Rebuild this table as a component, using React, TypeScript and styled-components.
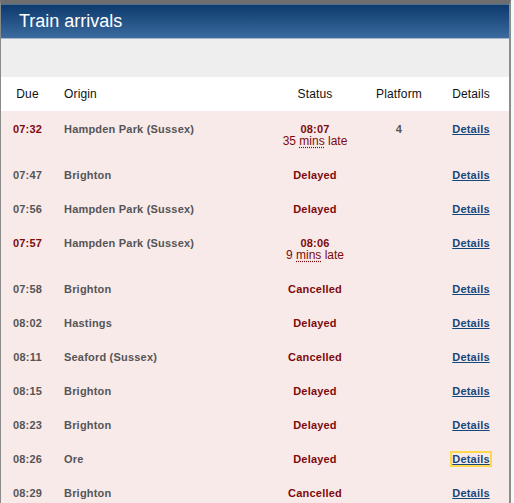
import React from 'react';
import styled, { createGlobalStyle } from 'styled-components';

const GlobalStyle = createGlobalStyle`
  html, body {
    margin: 0;
    padding: 0;
    background: #f4f7fb;
    font-family: "Liberation Sans", Arial, sans-serif;
  }
`;

const Frame = styled.div`
  width: 508px;
  border-top: 4px solid #6e6e6e;
  border-left: 1px solid #8a8a8a;
  border-right: 2px solid #8c8c8c;
  background: #fff;
  height: 499px;
  overflow: hidden;
`;

const TitleBar = styled.div`
  height: 33px;
  border-top: 1px solid #4a6f99;
  background: linear-gradient(to bottom, #0e3a6c, #3a6b9f);
  border-bottom: 1px solid #a9b8c8;
  display: flex;
  align-items: center;
  padding-left: 18px;
  h1 {
    margin: 0;
    font-size: 18px;
    font-weight: normal;
    color: #fff;
  }
`;

const FilterPanel = styled.div`
  height: 38px;
  background: #eeeeee;
`;

const Table = styled.table`
  width: 508px;
  border-collapse: collapse;
  table-layout: fixed;
`;

const Head = styled.th<{ $w: number; $left?: boolean }>`
  width: ${(p) => (p.$left ? p.$w - 10 : p.$w)}px;
  height: 34px;
  padding: ${(p) => (p.$left ? '0 0 0 10px' : '0')};
  text-align: ${(p) => (p.$left ? 'left' : 'center')};
  font-size: 12px;
  font-weight: normal;
  letter-spacing: 0.15px;
  color: #111;
  background: #fff;
`;

const Row = styled.tr`
  background: #f9eaea;
`;

const Cell = styled.td<{ $left?: boolean; $tone?: 'late' | 'red' | 'grey' }>`
  padding: ${(p) => (p.$left ? '12px 0 10px 10px' : '12px 0 10px')};
  text-align: ${(p) => (p.$left ? 'left' : 'center')};
  vertical-align: top;
  font-size: 11px;
  line-height: 12px;
  font-weight: bold;
  letter-spacing: 0.2px;
  color: ${(p) => (p.$tone === 'late' || p.$tone === 'red' ? '#7d0a0a' : '#555555')};
`;

const LateNote = styled.span`
  display: block;
  font-weight: normal;
  letter-spacing: 0;
  font-size: 12px;
  abbr {
    text-decoration: underline dotted;
    text-underline-offset: 2px;
  }
`;

const DetailsLink = styled.a<{ $focus?: boolean }>`
  color: #17477a;
  text-decoration: underline;
  cursor: pointer;
  outline: ${(p) => (p.$focus ? '2px solid #ffd84d' : 'none')};
  outline-offset: 0;
`;

type Train = {
  due: string;
  origin: string;
  status: string;
  expected?: string;
  late?: number;
  platform?: string;
  focus?: boolean;
};

const trains: Train[] = [
  { due: '07:32', origin: 'Hampden Park (Sussex)', status: '', expected: '08:07', late: 35, platform: '4' },
  { due: '07:47', origin: 'Brighton', status: 'Delayed' },
  { due: '07:56', origin: 'Hampden Park (Sussex)', status: 'Delayed' },
  { due: '07:57', origin: 'Hampden Park (Sussex)', status: '', expected: '08:06', late: 9 },
  { due: '07:58', origin: 'Brighton', status: 'Cancelled' },
  { due: '08:02', origin: 'Hastings', status: 'Delayed' },
  { due: '08:11', origin: 'Seaford (Sussex)', status: 'Cancelled' },
  { due: '08:15', origin: 'Brighton', status: 'Delayed' },
  { due: '08:23', origin: 'Brighton', status: 'Delayed' },
  { due: '08:26', origin: 'Ore', status: 'Delayed', focus: true },
  { due: '08:29', origin: 'Brighton', status: 'Cancelled' },
];

const App = () => {
  return (
    <>
      <GlobalStyle />
      <Frame>
        <TitleBar>
          <h1>Train arrivals</h1>
        </TitleBar>
        <FilterPanel />
        <Table>
          <thead>
            <tr>
              <Head $w={53}>Due</Head>
              <Head $w={211} $left>
                Origin
              </Head>
              <Head $w={100}>Status</Head>
              <Head $w={68}>Platform</Head>
              <Head $w={76}>Details</Head>
            </tr>
          </thead>
          <tbody>
            {trains.map((t) => (
              <Row key={t.due}>
                <Cell $tone={t.expected ? 'late' : 'grey'}>{t.due}</Cell>
                <Cell $left>{t.origin}</Cell>
                <Cell $tone="red">
                  {t.expected ? (
                    <>
                      {t.expected}
                      <LateNote>
                        {t.late} <abbr title="minutes">mins</abbr> late
                      </LateNote>
                    </>
                  ) : (
                    t.status
                  )}
                </Cell>
                <Cell>{t.platform}</Cell>
                <Cell>
                  <DetailsLink $focus={t.focus}>Details</DetailsLink>
                </Cell>
              </Row>
            ))}
          </tbody>
        </Table>
      </Frame>
    </>
  );
};

export default App;
